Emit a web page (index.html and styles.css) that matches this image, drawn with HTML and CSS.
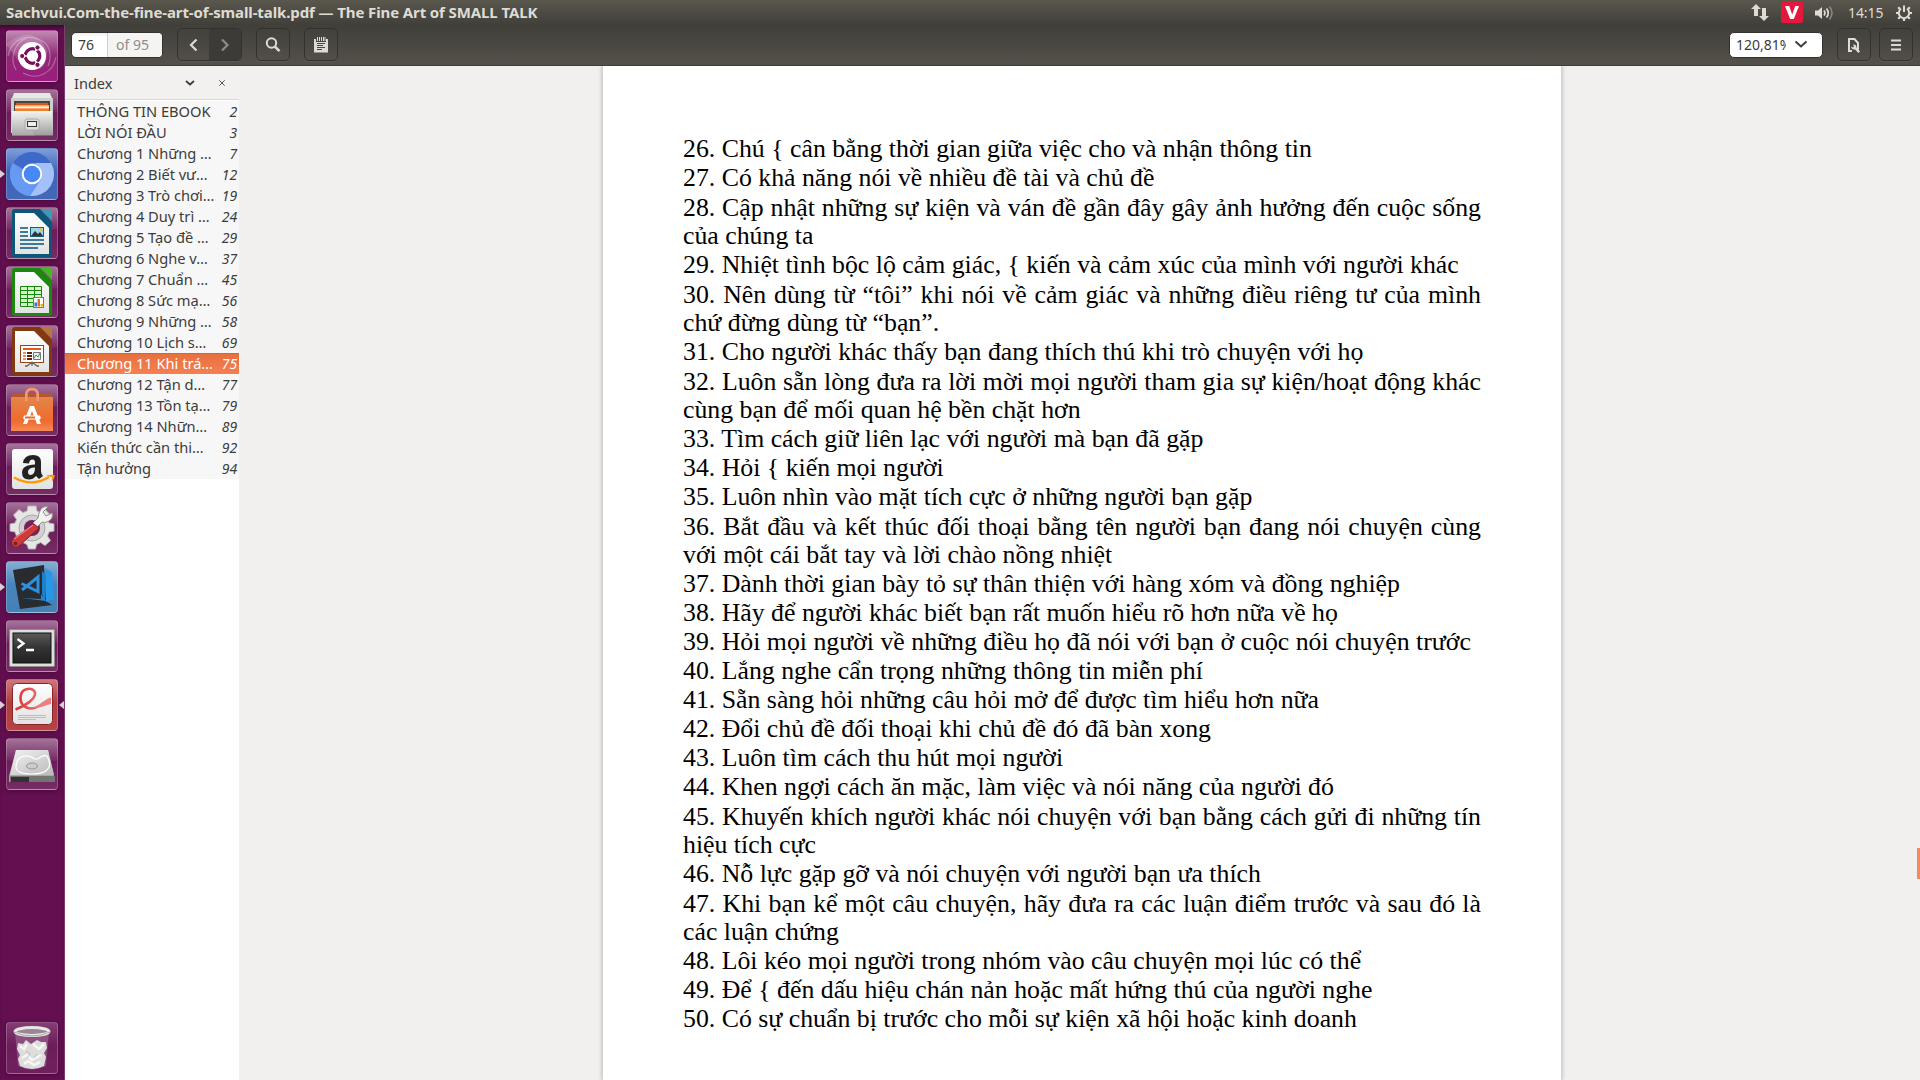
FILE: index.html
```html
<!DOCTYPE html>
<html lang="vi">
<head>
<meta charset="utf-8">
<title>The Fine Art of SMALL TALK</title>
<link rel="stylesheet" href="styles.css">
</head>
<body>
<svg width="0" height="0" class="defs">
  <defs>
    <linearGradient id="metal" x1="0" y1="0" x2="0" y2="1"><stop offset="0" stop-color="#f4f4f2"/><stop offset="1" stop-color="#9d9d9b"/></linearGradient>
    <linearGradient id="paper" x1="0" y1="0" x2="0" y2="1"><stop offset="0" stop-color="#ffffff"/><stop offset="1" stop-color="#e2e2e2"/></linearGradient>
    <linearGradient id="bag" x1="0" y1="0" x2="0" y2="1"><stop offset="0" stop-color="#e2854b"/><stop offset=".7" stop-color="#f06a2c"/><stop offset="1" stop-color="#f58a58"/></linearGradient>
    <linearGradient id="screen" x1="0" y1="0" x2="0" y2="1"><stop offset="0" stop-color="#5a5a5a"/><stop offset=".5" stop-color="#333"/><stop offset="1" stop-color="#222"/></linearGradient>
    <linearGradient id="disc" x1="0" y1="0" x2="1" y2="1"><stop offset="0" stop-color="#f2f2f2"/><stop offset="1" stop-color="#b9b9b9"/></linearGradient>
    <linearGradient id="ribbon" x1="0" y1="0" x2="1" y2="0"><stop offset="0" stop-color="#dd3030"/><stop offset="1" stop-color="#f09090"/></linearGradient>
  </defs>
</svg>
<div class="desktop">
  <header class="topbar">
    <h1 class="window-title">Sachvui.Com-the-fine-art-of-small-talk.pdf — The Fine Art of SMALL TALK</h1>
    <div class="indicators">
      <svg class="ind net" width="18" height="18" viewBox="0 0 18 18" fill="#dfdbd2"><path d="M5 0 10 5H7v7H3V5H0zM13 17 8 12h3V4h4v8h3z"/></svg>
      <span class="unikey"><svg width="22" height="22" viewBox="0 0 22 22"><path d="M4 5h4.200l3 8.500L14.200 5h3.800l-5.200 13H9.200z" fill="#fff"/></svg></span>
      <svg class="ind volume" width="20" height="16" viewBox="0 0 20 16"><path d="M0 5.500h3L7 2v12l-4-3.500H0z" fill="#dfdbd2"/><path d="M9 5.500q2 2.500 0 5M11.500 3.500q3.500 4.500 0 9" fill="none" stroke="#dfdbd2" stroke-width="1.700"/><path d="M14.500 1.500q5 6.500 0 13" fill="none" stroke="#89877f" stroke-width="1.600"/></svg>
      <time class="clock">14:15</time>
      <svg class="ind session" width="18" height="18" viewBox="0 0 18 18" fill="none" stroke="#dfdbd2"><path d="M6 4.700A5.200 5.200 0 1 0 12 4.700" stroke-width="2"/><path d="M9 1.500V8" stroke-width="2"/><path d="M3.500 9H1M17 9h-2.500M5 13l-1.800 1.800M13 13l1.800 1.800M9 14.500V17M5 5 3.200 3.200M13 5l1.800-1.800" stroke-width="2.200"/></svg>
    </div>
  </header>
  <div class="below">
    <nav class="launcher">
      <div class="tile dash"><svg viewBox="0 0 52 52"><path d="M2 26C5 9 22 2 38 12 44 17 46 27 42 36M50 27C47 43 31 51 17 43M10 40C3 28 9 12 21 8" fill="none" stroke="#fff" stroke-opacity=".3" stroke-width="1.200"/><path d="M0 14Q28-7 41 20 42 34 34 39L12 30Z" fill="#fff" opacity=".16"/><circle cx="26" cy="26" r="14" fill="#fff"/><circle cx="26.500" cy="26" r="7.300" fill="none" stroke="#771157" stroke-width="3.200"/><path d="m26.500 26-10 0M26.500 26l5.500 9M26.500 26l5.500-9" stroke="#fff" stroke-width="1.500"/><g fill="#771157" stroke="#fff"><circle cx="16.200" cy="26" r="2.600"/><circle cx="31.500" cy="17.500" r="2.600"/><circle cx="31.500" cy="34.800" r="2.600"/></g></svg></div>
      <div class="tile"><svg viewBox="0 0 52 52"><path d="M8 4h36l3 8v32H5V12z" fill="#777"/><path d="M8 4h36l3 8H5z" fill="#e7e7e6"/><path d="M5 9h42v35H5z" fill="#cececd"/><path d="M8 12h36v13H8z" fill="#49463f"/><path d="M10 14h32v3H10z" fill="#d75a22"/><path d="M9 16h34v4H9z" fill="#f4a45c"/><path d="M9 17.500h34V19H9z" fill="#fff3da"/><path d="M9 20h34v2H9z" fill="#ec8035"/><path d="M6 22h40l1 24.500H6z" fill="url(#metal)"/><path d="M6 22h10l13 25H6z" fill="#fff" opacity=".12"/><rect x="19" y="30" width="14" height="11" rx="2.500" fill="#ddd" stroke="#aaa"/><rect x="21.500" y="32.500" width="9" height="5" fill="#eee" stroke="#333"/></svg></div>
      <div class="tile chrome running"><svg viewBox="0 0 52 52"><circle cx="26" cy="26" r="22" fill="#6597ef"/><path d="M7 15A22 22 0 0 1 45 15H26A11 11 0 0 0 17 21z" fill="#3f69c7"/><path d="M7 15 17 31Q20 37 26 37L23 48A22 22 0 0 1 7 15z" fill="#679bf3"/><path d="M45 15H29Q38 20 36 30L24 48A22 22 0 0 0 45 15z" fill="#a3c0f8"/><circle cx="26" cy="26" r="10.300" fill="#fff"/><circle cx="26" cy="26" r="8.300" fill="#4688f4"/></svg></div>
      <div class="tile"><svg viewBox="0 0 52 52"><path d="M9 2h25l12 13v32q0 3-3 3H9q-3 0-3-3V5q0-3 3-3z" fill="#0b5679"/><path d="M35 2h9q2 0 2 2v10z" fill="#3b9bb8"/><path d="M9 6h19l15 15v26H9z" fill="url(#paper)"/><path d="M14 21h8M14 25h8M14 29h8M14 33h24M14 37h24M14 41h18" stroke="#08547b" stroke-width="1.700"/><rect x="24.500" y="20.500" width="13" height="9" fill="#9bd5ef" stroke="#126081"/><path d="m25 29 4-5 3 3 2-2 3 4z" fill="#333"/><circle cx="35" cy="22.500" r="1.500" fill="#f5c320"/></svg></div>
      <div class="tile"><svg viewBox="0 0 52 52"><path d="M9 2h25l12 13v32q0 3-3 3H9q-3 0-3-3V5q0-3 3-3z" fill="#1c880d"/><path d="M35 2h9q2 0 2 2v10z" fill="#42b91c"/><path d="M9 6h19l15 15v26H9z" fill="url(#paper)"/><path d="M14 20.500h22v20H14z" fill="#d6f4ca"/><path d="M14.500 20.500h21v20h-21zM14 24.500h22M14 28.500h22M14 32.500h22M14 36.500h22M21.500 20v20M28.500 20v20" fill="none" stroke="#18880c"/><rect x="27.500" y="31.500" width="10" height="10" fill="#fff" stroke="#777"/><path d="M28.500 36.500h2.500v4h-2.500z" fill="#1482cc"/><path d="M31.500 33h2.500v7.500h-2.500z" fill="#e96a22"/><path d="M34.500 38h2.500v2.500h-2.500z" fill="#e4b611"/></svg></div>
      <div class="tile"><svg viewBox="0 0 52 52"><path d="M9 2h25l12 13v32q0 3-3 3H9q-3 0-3-3V5q0-3 3-3z" fill="#823810"/><path d="M35 2h9q2 0 2 2v10z" fill="#bb743e"/><path d="M9 6h19l15 15v26H9z" fill="url(#paper)"/><rect x="14.500" y="20.500" width="23" height="17" fill="#fff" stroke="#9b4211"/><path d="M17 24h18" stroke="#df5c1e" stroke-width="2"/><path d="M17 28h3M17 31h3M17 34h3" stroke="#da6a30" stroke-width="1.500"/><path d="M21 28h5M21 31h5M21 34h5" stroke="#632206" stroke-width="1.800"/><path d="M27.500 27.500h7v7h-7z" fill="#eee" stroke="#777"/><path d="m28 33 2-3 2 2 2-4" fill="none" stroke="#3a9a33"/><path d="m26 37-5 4h-2M26 37l5 4h2M26 37v4" stroke="#666" stroke-width="1.300" fill="none"/></svg></div>
      <div class="tile"><svg viewBox="0 0 52 52"><path d="M7 10h38l2 4H5z" fill="#b8562e"/><path d="M5 13h42v34H5z" fill="url(#bag)"/><path d="M20.500 17V10q0-5 5.500-5t5.500 5v7" fill="none" stroke="#e9875e" stroke-width="3"/><path d="M20 17V9q1-4 6-4t6 4v8" fill="none" stroke="#f7ad8d" stroke-width="1"/><path d="M24 22h4l7 18h-4l-5-13-5 13h-4z" fill="#fff"/><path d="M18 31.500h16q1.500 2.500 0 4H18q-1.500-2 0-4z" fill="#fff"/><path d="M19 32.500h10v2H19z" fill="#ed6828"/></svg></div>
      <div class="tile"><svg viewBox="0 0 52 52"><rect x="6" y="6" width="41" height="40" rx="3" fill="url(#paper)"/><path d="M17 20q1-8 10-8 8 0 8 7v9q0 3 2 5l-4 3-3-3q-3 3.500-7 3.500-7 0-7-7 0-7.500 13-8v-2q0-3-2.500-3-3 0-3.500 4zM29 24.500q-7 0-7 4.500 0 3 2.500 3 4.500 0 4.500-7.500z" fill="#222" fill-rule="evenodd"/><path d="M8 34.500q18 10 35-.5" fill="none" stroke="#ff9900" stroke-width="2.300"/><path d="M40 32.500q7-1.500 9 0-1 4-3.500 6.500 1-4 0-5-2-.5-5.500-1.500z" fill="#ff9900"/></svg></div>
      <div class="tile"><svg viewBox="0 0 52 52"><path d="m22 4 8 0 1 5 4 1.500 4-3 5.500 5.500-3 4.500 1.500 3.500 5 1v7l-5 1-1.500 4 3 4.500-5.500 5-4.500-3-4 2-1 4.500h-7l-1.500-4.500-4-2-4 3-5.500-5 3-4.500-1.500-4-5-1v-7l5-1 1.500-3.500-3-4.500 5.500-5.500 4 3 4-1.500z" fill="#e6e6e6" stroke="#b6b6b6"/><circle cx="26" cy="26" r="13" fill="#d0d0d0" stroke="#aaa"/><circle cx="26" cy="26" r="8" fill="#76205f"/><path d="M33 11q3-8 9-6l-5 5 3 4 6-3q2 6-5 9-3 1-5 0l-5 5-4-4 5-5z" fill="#f2f2f1" stroke="#919191"/><path d="m28 22 5 4-20 18q-3 3-6 0t-1-6z" fill="#cf3b3b" stroke="#8f1c22"/><path d="m8 37 19-14" stroke="#ed8580" stroke-width="1.200"/><circle cx="9.500" cy="41.500" r="1.800" fill="#7f1b1b"/></svg></div>
      <div class="tile vscode running"><svg viewBox="0 0 52 52"><path d="m7 9 31-5 2 36 6 4-32 4z" fill="#292b2e"/><path d="m39 7 7 4 2 27-8 3z" fill="#2997e8"/><path d="m36 10 4 4-1 27-3-8z" fill="#1c80cb"/><path d="m15 37 20 1v-5l5 7z" fill="#168ce0"/><path d="m15.500 22.500 16.500 8V16L16 29" fill="none" stroke="#2a91df" stroke-width="3"/></svg></div>
      <div class="tile"><svg viewBox="0 0 52 52"><rect x="3.500" y="9.500" width="45" height="37" rx="1" fill="#dededd" stroke="#8e8e8c"/><rect x="7" y="13" width="38" height="30" fill="url(#screen)" stroke="#111"/><path d="m11.500 19 6 4.500-6 4.500M20 30h8" fill="none" stroke="#fff" stroke-width="2.300"/></svg></div>
      <div class="tile evince running active"><svg viewBox="0 0 52 52"><rect x="6.500" y="4.500" width="40" height="41" rx="4" fill="url(#paper)" stroke="#872526"/><path d="M9.500 30.500C19 27 30 20 29 13.500 28 8 15 8 14.500 18 14 29 25 32 33 27 38 24 41 21 45 19.500" fill="none" stroke="url(#ribbon)" stroke-width="2.600"/><path d="M28 28.500C34 27 40 21 45 19.500v5.500C39 26 34 30 28 28.500z" fill="#ee7f7f"/><path d="M12 36.500h28M12 38.500h28M12 40.500h18" stroke="#bdbdbd" stroke-width="1"/></svg></div>
      <div class="tile"><svg viewBox="0 0 52 52"><path d="M10 12h32l6 26v6H3v-6z" fill="#a8a8a6"/><path d="M10 12h32l6 25H4z" fill="url(#disc)"/><path d="M4 38h45v6H4z" fill="#747472"/><path d="M5 39h18v5H5z" fill="#333"/><path d="M10 29c0-11 10-14 19-8 3 2 6-5 12-3 7 12-1 18-15 18-9 0-16-2-16-7z" fill="none" stroke="#fff" stroke-width="1.200"/><ellipse cx="26" cy="28" rx="5.500" ry="3" fill="#ccc" stroke="#979797"/></svg></div>
      <div class="tile trash"><svg viewBox="0 0 52 52"><path d="m9 10 3 34q14 7 28 0l3-34z" fill="#fff" opacity=".2"/><path d="m12 21 5 1 3-4 5 4 6-4 4 2 5 0 1 6-3 5 2 4-2 9q-12 6-24 0l-2-7 2-4-3-6z" fill="#dddddb"/><path d="m14 24 4 3 3-5M27 22l6 5 5-5M16 36l5-3 5 5 9-5M18 42l4-3 6 4 6-3" fill="none" stroke="#f6f6f6" stroke-width="2.500"/><path d="m20 29 4 3-3 4M31 32l-3 4" fill="none" stroke="#bebebc"/><ellipse cx="26" cy="9.500" rx="17" ry="4" fill="#9a8495" stroke="#e7e7e5" stroke-width="3"/><path d="M8 10q18 8 36 0" fill="none" stroke="#a8a8a5"/></svg></div>
    </nav>
    <section class="window">
      <div class="toolbar">
        <div class="pager"><span class="page-no">76</span><span class="page-total">of 95</span></div>
        <div class="history">
          <span class="half"><svg width="10" height="14" viewBox="0 0 10 14"><path d="M7.500 1.500 2 7l5.500 5.500" fill="none" stroke="#dfdbd2" stroke-width="2.200"/></svg></span>
          <span class="half next"><svg width="10" height="14" viewBox="0 0 10 14"><path d="M2 1.500 7.500 7 2 12.500" fill="none" stroke="#8f8c85" stroke-width="2.200"/></svg></span>
        </div>
        <span class="btn search"><svg width="16" height="16" viewBox="0 0 16 16" fill="none" stroke="#dfdbd2"><circle cx="6.500" cy="6" r="4.700" stroke-width="2"/><path d="m9.800 9.500 4.700 4.700" stroke-width="2.500"/></svg></span>
        <span class="btn notes"><svg width="14" height="16" viewBox="0 0 14 16"><path d="M1 2v12.500h12V2" fill="none" stroke="#dfdbd2" stroke-width="2"/><path d="M1 5h12v10H1z" fill="#dfdbd2"/><path d="M3.500 0v4M5.500 0v4M7.500 0v4M9.500 0v4M11 0v4" stroke="#dfdbd2"/><path d="M3 6.500h8M3 8.500h6M3 10.500h8M3 12.500h5" stroke="#464540"/></svg></span>
        <div class="zoom"><span class="zoom-value">120,81%</span><svg width="14" height="9" viewBox="0 0 14 9"><path d="m1.500 1.500 5.500 5 5.500-5" fill="none" stroke="#3c3c3c" stroke-width="2"/></svg></div>
        <span class="btn view"><svg width="14" height="16" viewBox="0 0 14 16"><path d="M5 14H2V2h5.500L11 6v8.500" fill="none" stroke="#dfdbd2" stroke-width="2"/><path d="M4 9.500 6 10.500 7 9.500 6 7.500Q9.500 7 9.500 10.500L13 14.500 11.500 16 8 12.500Q4.500 13 4 9.500z" fill="#dfdbd2"/></svg></span>
        <span class="btn menu"><svg width="10" height="12" viewBox="0 0 10 12"><path d="M0 1.500h10M0 6h10M0 10.500h10" stroke="#dfdbd2" stroke-width="2"/></svg></span>
      </div>
      <div class="content">
        <aside class="sidebar">
          <div class="side-head"><span class="side-title">Index</span><svg class="caret" width="10" height="6" viewBox="0 0 10 6"><path d="m1 1 4 3.500L9 1" fill="none" stroke="#3c3c3c" stroke-width="1.700"/></svg><svg class="close" width="6" height="6" viewBox="0 0 6 6"><path d="m.3.3 5.400 5.400M5.700.3.300 5.700" stroke="#555" stroke-width="1"/></svg></div>
          <ul class="outline">
            <li><span>THÔNG TIN EBOOK</span><i>2</i></li>
            <li><span>LỜI NÓI ĐẦU</span><i>3</i></li>
            <li><span>Chương 1 Những …</span><i>7</i></li>
            <li><span>Chương 2 Biết vư…</span><i>12</i></li>
            <li><span>Chương 3 Trò chơi…</span><i>19</i></li>
            <li><span>Chương 4 Duy trì …</span><i>24</i></li>
            <li><span>Chương 5 Tạo đề …</span><i>29</i></li>
            <li><span>Chương 6 Nghe v…</span><i>37</i></li>
            <li><span>Chương 7 Chuẩn …</span><i>45</i></li>
            <li><span>Chương 8 Sức mạ…</span><i>56</i></li>
            <li><span>Chương 9 Những …</span><i>58</i></li>
            <li><span>Chương 10 Lịch s…</span><i>69</i></li>
            <li class="selected"><span>Chương 11 Khi trá…</span><i>75</i></li>
            <li><span>Chương 12 Tận d…</span><i>77</i></li>
            <li><span>Chương 13 Tồn tạ…</span><i>79</i></li>
            <li><span>Chương 14 Nhữn…</span><i>89</i></li>
            <li><span>Kiến thức cần thi…</span><i>92</i></li>
            <li><span>Tận hưởng</span><i>94</i></li>
          </ul>
        </aside>
        <main class="viewer">
          <article class="page">
            <p>26. Chú { cân bằng thời gian giữa việc cho và nhận thông tin</p>
            <p>27. Có khả năng nói về nhiều đề tài và chủ đề</p>
            <p><span class="full">28. Cập nhật những sự kiện và ván đề gần đây gây ảnh hưởng đến cuộc sống</span>của chúng ta</p>
            <p>29. Nhiệt tình bộc lộ cảm giác, { kiến và cảm xúc của mình với người khác</p>
            <p><span class="full">30. Nên dùng từ “tôi” khi nói về cảm giác và những điều riêng tư của mình</span>chứ đừng dùng từ “bạn”.</p>
            <p>31. Cho người khác thấy bạn đang thích thú khi trò chuyện với họ</p>
            <p><span class="full">32. Luôn sẵn lòng đưa ra lời mời mọi người tham gia sự kiện/hoạt động khác</span>cùng bạn để mối quan hệ bền chặt hơn</p>
            <p>33. Tìm cách giữ liên lạc với người mà bạn đã gặp</p>
            <p>34. Hỏi { kiến mọi người</p>
            <p>35. Luôn nhìn vào mặt tích cực ở những người bạn gặp</p>
            <p><span class="full">36. Bắt đầu và kết thúc đối thoại bằng tên người bạn đang nói chuyện cùng</span>với một cái bắt tay và lời chào nồng nhiệt</p>
            <p>37. Dành thời gian bày tỏ sự thân thiện với hàng xóm và đồng nghiệp</p>
            <p>38. Hãy để người khác biết bạn rất muốn hiểu rõ hơn nữa về họ</p>
            <p>39. Hỏi mọi người về những điều họ đã nói với bạn ở cuộc nói chuyện trước</p>
            <p>40. Lắng nghe cẩn trọng những thông tin miễn phí</p>
            <p>41. Sẵn sàng hỏi những câu hỏi mở để được tìm hiểu hơn nữa</p>
            <p>42. Đổi chủ đề đối thoại khi chủ đề đó đã bàn xong</p>
            <p>43. Luôn tìm cách thu hút mọi người</p>
            <p>44. Khen ngợi cách ăn mặc, làm việc và nói năng của người đó</p>
            <p><span class="full">45. Khuyến khích người khác nói chuyện với bạn bằng cách gửi đi những tín</span>hiệu tích cực</p>
            <p>46. Nỗ lực gặp gỡ và nói chuyện với người bạn ưa thích</p>
            <p><span class="full">47. Khi bạn kể một câu chuyện, hãy đưa ra các luận điểm trước và sau đó là</span>các luận chứng</p>
            <p>48. Lôi kéo mọi người trong nhóm vào câu chuyện mọi lúc có thể</p>
            <p>49. Để { đến dấu hiệu chán nản hoặc mất hứng thú của người nghe</p>
            <p>50. Có sự chuẩn bị trước cho mỗi sự kiện xã hội hoặc kinh doanh</p>
          </article>
          <div class="scroll-thumb"></div>
        </main>
      </div>
    </section>
  </div>
</div>
</body>
</html>
```
FILE: styles.css
```css
* { box-sizing: border-box; }
html, body { margin: 0; height: 100%; overflow: hidden; }
body { font-family: "Noto Sans", "Open Sans", sans-serif; font-size: 14px; color: #3c3c3c; }
svg { display: block; flex: none; }
.defs { position: absolute; }
.desktop { display: flex; flex-direction: column; width: 1920px; height: 1080px; }

.topbar { flex: none; height: 25px; display: flex; align-items: center; justify-content: space-between; padding: 0 7px 0 6px; background: linear-gradient(#5a574d, #403f3a); color: #dfdbd2; }
.window-title { margin: 0; font-size: 15px; font-weight: 700; line-height: 23px; white-space: nowrap; letter-spacing: -.11px; }
.indicators { display: flex; align-items: center; height: 25px; }
.net { margin-right: 12px; }
.unikey { width: 22px; height: 22px; margin-right: 12px; margin-bottom: 1px; background: #e5173c; border-radius: 2px; }
.volume { margin-right: 13px; }
.clock { width: 36px; margin-right: 11px; line-height: 24px; white-space: nowrap; letter-spacing: -.1px; }

.below { flex: 1; display: flex; min-height: 0; }
.launcher { flex: none; width: 65px; padding: 5px 0 6px 6px; display: flex; flex-direction: column; gap: 7px; background: #630f50; border-right: 1px solid #7d3c70; box-shadow: inset 0 5px 4px -3px #35082b; }
.tile { position: relative; flex: none; width: 52px; height: 52px; border-radius: 4px; border: 1px solid rgba(255,255,255,.22); background: linear-gradient(rgba(255,255,255,.42), rgba(255,255,255,.12) 42%, rgba(255,255,255,.06) 45%, rgba(255,255,255,.12)); box-shadow: 0 1px 4px rgba(30,0,25,.4); }
.tile svg { width: 52px; height: 52px; margin: -1px; }
.dash { background: linear-gradient(#c18ab3, #8f2875 50%, #9c1d7e); }
.chrome { background: linear-gradient(#7e9dda, #4065b7 45%, #4368b8); }
.vscode { background: linear-gradient(#86aed3, #4784bb 45%, #4680b5); }
.evince { background: linear-gradient(#cf7779, #b13c40 45%, #b84145); }
.trash { margin-top: auto; background: linear-gradient(rgba(255,255,255,.2), rgba(255,255,255,.06) 45%, rgba(255,255,255,.08)); }
.running::before, .active::after { content: ""; position: absolute; top: 21px; border: 4px solid transparent; }
.running::before { left: -7px; border-left: 5px solid #d8d0d6; border-right: 0; }
.active::after { right: -7px; border-right: 5px solid #d8d0d6; border-left: 0; }

.window { flex: 1; min-width: 0; display: flex; flex-direction: column; }
.toolbar { flex: none; height: 41px; display: flex; align-items: center; padding: 0 7px 1px 6px; background: linear-gradient(#403f3a, #545149); border-bottom: 1px solid #3e3c37; }
.pager, .zoom { display: flex; align-items: center; height: 26px; border-radius: 5px; background: #fff; border: 1px solid #33322e; line-height: 24px; }
.pager { width: 92px; margin-right: 14px; background: linear-gradient(#eee, #fff 4px); }
.page-no { width: 36px; padding-left: 6px; border-right: 1px solid #ccc; }
.page-total { flex: 1; padding-left: 8px; background: #f4f4f3; border-radius: 0 4px 4px 0; color: #8e8e8e; white-space: nowrap; }
.history, .btn { height: 33px; border: 1px solid #33322e; border-radius: 5px; box-shadow: 0 1px 0 rgba(255,255,255,.06); }
.history { display: flex; width: 65px; margin-right: 14px; }
.half { width: 31px; display: grid; place-items: center; }
.next { width: 32px; background: #3c3b37; }
.btn { width: 34px; display: grid; place-items: center; }
.search { margin-right: 14px; }
.zoom { width: 94px; margin-left: auto; margin-right: 14px; padding-left: 6px; }
.zoom-value { width: 50px; overflow: hidden; white-space: nowrap; margin-right: 8px; }
.view { margin-right: 8px; }

.content { flex: 1; min-height: 0; display: flex; }
.sidebar { flex: none; width: 174px; background: #fff; }
.side-head { height: 34px; display: flex; align-items: center; padding-left: 9px; background: #f2f1f0; border-bottom: 1px solid #d9d7d5; }
.side-title { width: 111px; font-size: 14.5px; }
.close { margin-left: 24px; }
.outline { list-style: none; margin: 0; padding: 1px 0 0; }
.outline li { display: flex; justify-content: space-between; height: 21px; line-height: 21px; padding: 0 2px 0 12px; background: #f7f7f7; white-space: nowrap; font-size: 14px; letter-spacing: -.1px; }
.outline span { font-size: 14.67px; letter-spacing: -.02px; }
.outline .selected { background: linear-gradient(#e8703f, #f58052); color: #fff; border-top: 1px solid #e0602f; line-height: 19px; }

.viewer { flex: 1; position: relative; background: #f1f0ee; overflow: hidden; }
.page { width: 960px; height: 100%; margin-left: 363px; padding: 68px 80px 0 80px; background: #fff; border: 1px solid #d5d3d1; border-width: 0 1px; box-shadow: 0 0 4px rgba(0,0,0,.25); font-family: "Liberation Serif", serif; font-size: 25.8px; line-height: 29.02px; color: #000; }
.page p { margin: 0; white-space: nowrap; }
.full { display: block; width: 798px; text-align-last: justify; position: relative; top: .7px; }
.scroll-thumb { position: absolute; right: 0; top: 782px; width: 3px; height: 31px; background: #f5895f; }
```
